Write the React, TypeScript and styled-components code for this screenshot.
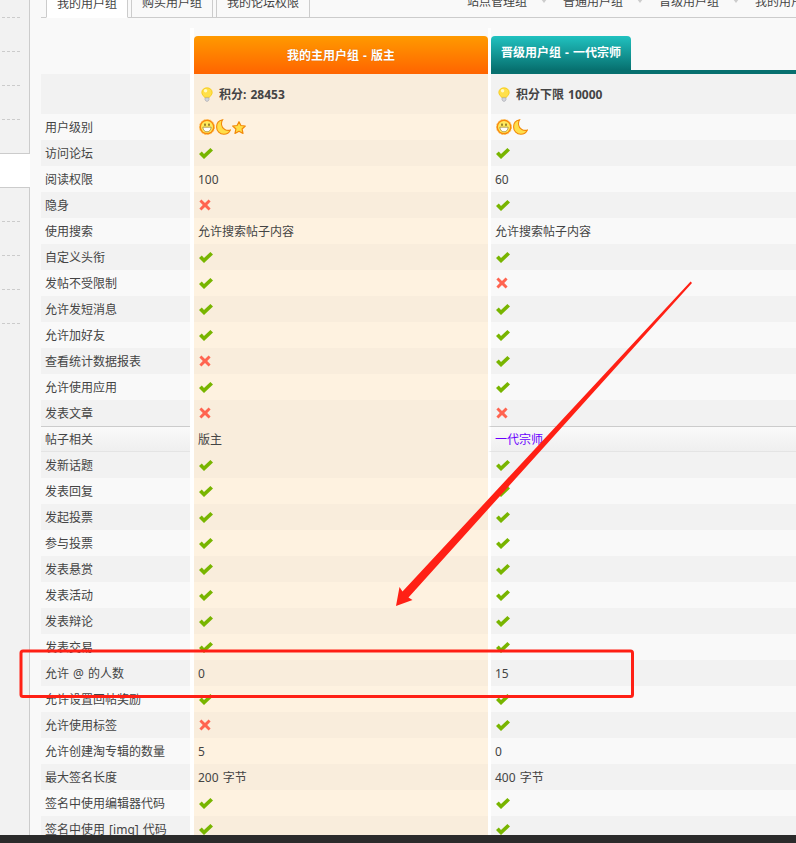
import React from "react";
import styled, { createGlobalStyle } from "styled-components";

const GlobalStyle = createGlobalStyle`
  * {
    box-sizing: border-box;
  }
  html,
  body {
    margin: 0;
    height: 100%;
    overflow: hidden;
    background: #f9f9f9;
  }
  body {
    font-family: "Noto Sans", "Noto Sans CJK SC", sans-serif;
    font-size: 12px;
    color: #444;
    word-spacing: 1px;
  }
`;

const Check = () => (
  <svg width="14" height="11" viewBox="0 0 14 11">
    <path d="M0 6 L2.8 3.6 L5 6 L11.4 0 L14 2.4 L5 11 Z" fill="#78b500" />
  </svg>
);

const Cross = () => (
  <svg width="12" height="12" viewBox="0 0 12 12">
    <path
      d="M2.4 0.6 L6 4 L9.6 0.6 L11.6 2.6 L8.2 6 L11.6 9.4 L9.6 11.4 L6 8 L2.4 11.4 L0.4 9.4 L3.8 6 L0.4 2.6 Z"
      fill="#ff6450"
    />
  </svg>
);

const Bulb = () => (
  <svg width="12" height="15" viewBox="0 0 12 15">
    <path
      d="M6 0.8 C9 0.8 11.2 2.8 11.2 5.5 C11.2 7.7 9.4 8.7 8.4 10.4 L3.6 10.4 C2.6 8.7 0.8 7.7 0.8 5.5 C0.8 2.8 3 0.8 6 0.8 Z"
      fill="#ffe04a"
      stroke="#f5c400"
      strokeWidth="0.7"
    />
    <circle cx="4.6" cy="3.8" r="1.7" fill="#fff8c4" />
    <path d="M4 10.8 H8 V12.8 L7 14.2 H5 L4 12.8 Z" fill="#d4d6dc" stroke="#9a9da6" strokeWidth="0.5" />
  </svg>
);

const Sun = () => (
  <svg width="16" height="16" viewBox="0 0 16 16">
    <circle cx="8" cy="8" r="7.6" fill="#f88a0c" strokeDasharray="2 1.2" stroke="#ffb640" strokeWidth="0.8" />
    <circle cx="8" cy="8" r="6" fill="#ffea5e" />
    <rect x="5.4" y="4.6" width="1.2" height="2.2" fill="#5a4510" />
    <rect x="9.4" y="4.6" width="1.2" height="2.2" fill="#5a4510" />
    <path d="M3.8 8.2 H12.2 C12 11.2 10 12.8 8 12.8 C6 12.8 4 11.2 3.8 8.2 Z" fill="#fff" stroke="#8a6a18" strokeWidth="0.6" />
  </svg>
);

const Moon = () => (
  <svg width="15" height="16" viewBox="0 0 15 16">
    <path
      d="M6.6 0.8 C3 1.4 0.6 4.4 0.6 8 C0.6 12.2 3.8 15.2 7.8 15.2 C10.8 15.2 13.2 13.6 14.4 11 C10.6 12.2 6.2 10 5.6 6 C5.3 4.2 5.7 2.2 6.6 0.8 Z"
      fill="#ffdf4a"
      stroke="#f28a0a"
      strokeWidth="1.1"
    />
  </svg>
);

const Star = () => (
  <svg width="14" height="13" viewBox="0 0 14 13">
    <path
      d="M7 0.7 L8.9 4.5 L13.3 5 L10.1 8 L11 12.4 L7 10.2 L3 12.4 L3.9 8 L0.7 5 L5.1 4.5 Z"
      fill="#ffdf4a"
      stroke="#f28a0a"
      strokeWidth="1.2"
      strokeLinejoin="round"
    />
  </svg>
);

type Value = "y" | "n" | string;
type RowData = [string, Value, Value];

const rowsTop: RowData[] = [
  ["访问论坛", "y", "y"],
  ["阅读权限", "100", "60"],
  ["隐身", "n", "y"],
  ["使用搜索", "允许搜索帖子内容", "允许搜索帖子内容"],
  ["自定义头衔", "y", "y"],
  ["发帖不受限制", "y", "n"],
  ["允许发短消息", "y", "y"],
  ["允许加好友", "y", "y"],
  ["查看统计数据报表", "n", "y"],
  ["允许使用应用", "y", "y"],
  ["发表文章", "n", "n"],
];

const rowsBottom: RowData[] = [
  ["发新话题", "y", "y"],
  ["发表回复", "y", "y"],
  ["发起投票", "y", "y"],
  ["参与投票", "y", "y"],
  ["发表悬赏", "y", "y"],
  ["发表活动", "y", "y"],
  ["发表辩论", "y", "y"],
  ["发表交易", "y", "y"],
  ["允许 @ 的人数", "0", "15"],
  ["允许设置回帖奖励", "y", "y"],
  ["允许使用标签", "n", "y"],
  ["允许创建淘专辑的数量", "5", "0"],
  ["最大签名长度", "200 字节", "400 字节"],
  ["签名中使用编辑器代码", "y", "y"],
  ["签名中使用 [img] 代码", "y", "y"],
];

const renderValue = (v: Value) => {
  if (v === "y") return <Check />;
  if (v === "n") return <Cross />;
  return v;
};

const App = () => {
  return (
    <Page>
      <GlobalStyle />
      <Body>
        <Sidebar>
          <SidePanel>
            <SideItem $first />
            <SideItem />
            <SideItem />
            <SideItem />
          </SidePanel>
          <SideGap />
          <SidePanel $fill>
            <SideItem />
            <SideItem />
            <SideItem />
            <SideItem />
          </SidePanel>
        </Sidebar>
        <Main>
          <TabBar>
            <Tab $active>我的用户组</Tab>
            <Tab>购买用户组</Tab>
            <Tab>我的论坛权限</Tab>
            <GroupNav>
              <GroupItem>站点管理组<Caret /></GroupItem>
              <GroupItem>普通用户组<Caret /></GroupItem>
              <GroupItem>晋级用户组<Caret /></GroupItem>
              <GroupItem>我的用户组</GroupItem>
            </GroupNav>
          </TabBar>

          <Table>
            <HeadRow>
              <div />
              <MainHeadCell>
                <MainHeading>我的主用户组 - 版主</MainHeading>
              </MainHeadCell>
              <NextHeadCell>
                <NextHeading>晋级用户组 - 一代宗师</NextHeading>
              </NextHeadCell>
            </HeadRow>

            <Row $height={40}>
              <Label $even />
              <MainCell $even>
                <Points>
                  <Bulb />
                  积分: 28453
                </Points>
              </MainCell>
              <NextCell $even>
                <Points>
                  <Bulb />
                  积分下限 10000
                </Points>
              </NextCell>
            </Row>

            <Row>
              <Label>用户级别</Label>
              <MainCell>
                <Sun />
                <Moon />
                <Star />
              </MainCell>
              <NextCell>
                <Sun />
                <Moon />
              </NextCell>
            </Row>

            {rowsTop.map((r, i) => (
              <Row key={r[0]}>
                <Label $even={i % 2 === 0}>{r[0]}</Label>
                <MainCell $even={i % 2 === 0}>{renderValue(r[1])}</MainCell>
                <NextCell $even={i % 2 === 0}>{renderValue(r[2])}</NextCell>
              </Row>
            ))}

            <Row>
              <Label $section>帖子相关</Label>
              <MainCell $even>版主</MainCell>
              <NextCell $section>
                <GroupLink>一代宗师</GroupLink>
              </NextCell>
            </Row>

            {rowsBottom.map((r, i) => (
              <Row key={r[0]}>
                <Label $even={i % 2 === 0}>{r[0]}</Label>
                <MainCell $even={i % 2 === 0}>{renderValue(r[1])}</MainCell>
                <NextCell $even={i % 2 === 0}>{renderValue(r[2])}</NextCell>
              </Row>
            ))}
          </Table>
        </Main>
      </Body>
      <BottomBar />

      <Markup viewBox="0 0 796 843">
        <rect x="21" y="651" width="611.5" height="45.5" rx="2" fill="none" stroke="#ff2015" strokeWidth="3" />
        <path
          d="M690.6 281.6 L692 283 L408.5 597.5 L412.5 600 L396 606 L399.5 587 L402.5 591.5 Z"
          fill="#ff2015"
        />
      </Markup>
    </Page>
  );
};

const Page = styled.div`
  position: relative;
  height: 100vh;
  display: flex;
  flex-direction: column;
  overflow: hidden;
`;

const Body = styled.div`
  flex: 1;
  min-height: 0;
  display: flex;
  overflow: hidden;
`;

const BottomBar = styled.div`
  flex: none;
  height: 8px;
  background: #2b2b2b;
`;

const Sidebar = styled.div`
  flex: none;
  width: 30px;
  display: flex;
  flex-direction: column;
`;

const SidePanel = styled.div<{ $fill?: boolean }>`
  background: #f2f2f2;
  border-right: 1px solid #ccc;
  ${(p) =>
    p.$fill
      ? `flex: 1; border-top: 1px solid #ccc;`
      : `height: 154px; border-bottom: 1px solid #ccc;`}
`;

const SideGap = styled.div`
  height: 33px;
  background: #fff;
`;

const SideItem = styled.div<{ $first?: boolean }>`
  height: ${(p) => (p.$first ? 18 : 34)}px;
  width: 18px;
  margin-left: 2px;
  border-bottom: 1px dashed #ccc;
`;

const Main = styled.div`
  flex: 1;
  min-width: 0;
  padding-left: 11px;
  background: #f9f9f9;
`;

const TabBar = styled.div`
  height: 18px;
  display: flex;
  align-items: flex-end;
  padding-left: 5px;
  gap: 3px;
  border-bottom: 1px solid #ccc;
  white-space: nowrap;
`;

const Tab = styled.div<{ $active?: boolean }>`
  flex: none;
  height: 32px;
  line-height: 33px;
  padding: 0 10px;
  border: 1px solid #ccc;
  background: ${(p) => (p.$active ? "#fff" : "#f9f9f9")};
  ${(p) => p.$active && "border-bottom-color: #fff; margin-bottom: -1px;"}
  ${(p) => !p.$active && "border-bottom: none;"}
`;

const GroupNav = styled.div`
  flex: none;
  display: flex;
  margin-left: 154px;
  height: 32px;
  line-height: 33px;
`;

const GroupItem = styled.div`
  position: relative;
  width: 96px;
`;

const Caret = styled.span`
  position: absolute;
  left: 74px;
  top: 14px;
  border-left: 3px solid transparent;
  border-right: 3px solid transparent;
  border-top: 4px solid #ccc;
`;

const Table = styled.div`
  margin-top: 10px;
  width: 755px;
`;

const HeadRow = styled.div`
  display: grid;
  grid-template-columns: 149px 298px 308px;
  height: 46px;
`;

const MainHeadCell = styled.div`
  border-left: 4px solid #fff;
  padding-top: 8px;
  display: flex;
`;

const MainHeading = styled.div`
  flex: 1;
  display: flex;
  align-items: center;
  justify-content: center;
  padding-bottom: 1px;
  border-radius: 4px 4px 0 0;
  background: linear-gradient(#ff9a00, #ff6400);
  color: #fff;
  font-weight: bold;
  text-shadow: 0 0 1px rgba(120, 50, 0, 0.4);
`;

const NextHeadCell = styled.div`
  border-left: 3px solid #fff;
  padding-top: 8px;
  display: flex;
  align-items: stretch;
  background: linear-gradient(#07706f, #07706f) bottom / 100% 4px no-repeat;
`;

const NextHeading = styled.div`
  width: 140px;
  height: 34px;
  line-height: 34px;
  padding-left: 10px;
  border-radius: 4px 4px 0 0;
  background: linear-gradient(#21c2c0, #07706f);
  color: #fff;
  font-weight: bold;
`;

const Row = styled.div<{ $height?: number }>`
  display: grid;
  grid-template-columns: 149px 298px 308px;
  height: ${(p) => p.$height ?? 26}px;
`;

const sectionStyle = `
  background: linear-gradient(#fafafa, #efefef);
  border-top: 1px solid #ccc;
  border-bottom: 1px solid #e4e4e4;
`;

const Label = styled.div<{ $even?: boolean; $section?: boolean }>`
  display: flex;
  align-items: center;
  padding-left: 4px;
  white-space: pre;
  background: ${(p) => (p.$even ? "#f2f2f2" : "#f9f9f9")};
  ${(p) => p.$section && sectionStyle}
`;

const MainCell = styled.div<{ $even?: boolean }>`
  display: flex;
  align-items: center;
  gap: 1px;
  padding-left: 4px;
  border-left: 4px solid #fff;
  background: ${(p) => (p.$even ? "#f9eddc" : "#fef2e0")};
  background-clip: padding-box;
  & > svg:first-child {
    margin-left: 1px;
  }
`;

const NextCell = styled.div<{ $even?: boolean; $section?: boolean }>`
  position: relative;
  display: flex;
  align-items: center;
  gap: 1px;
  padding-left: 4px;
  border-left: 3px solid #fff;
  background: ${(p) => (p.$even ? "#f2f2f2" : "#f9f9f9")};
  background-clip: padding-box;
  & > svg:first-child {
    margin-left: 1px;
  }
  ${(p) =>
    p.$section &&
    `
    background: linear-gradient(#fafafa, #efefef);
    background-clip: padding-box;
    border-top: 1px solid #ccc;
    border-bottom: 1px solid #e4e4e4;
  `}
`;

const Points = styled.div`
  display: flex;
  align-items: center;
  gap: 6px;
  padding-left: 3px;
  font-weight: bold;
`;

const GroupLink = styled.span`
  color: #6a00ff;
`;

const Markup = styled.svg`
  position: absolute;
  inset: 0;
  width: 796px;
  height: 843px;
  pointer-events: none;
`;

export default App;
